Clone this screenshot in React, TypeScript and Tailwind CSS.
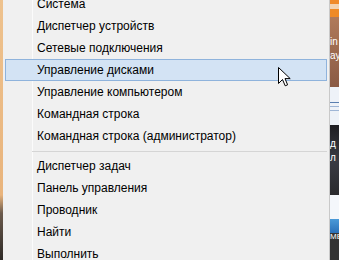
import React from "react";

const top = [
  "Система",
  "Диспетчер устройств",
  "Сетевые подключения",
  "Управление дисками",
  "Управление компьютером",
  "Командная строка",
  "Командная строка (администратор)",
];
const bottom = ["Диспетчер задач", "Панель управления", "Проводник", "Найти", "Выполнить"];

function Row({ label, active }: { label: string; active?: boolean }) {
  return (
    <div
      className={
        active
          ? "h-[22px] flex items-center pl-[31px] border border-[#8fb3dc] bg-[#d3e3f4]"
          : "h-[22px] flex items-center pl-[32px]"
      }
    >
      <span className="text-[12px] text-[#000] leading-none whitespace-nowrap">{label}</span>
    </div>
  );
}

export default function App() {
  return (
    <div
      className="w-[339px] h-[260px] overflow-hidden flex"
      style={{ fontFamily: '"Liberation Sans", Arial, sans-serif' }}
    >
      <div className="w-[3px] h-full bg-[linear-gradient(to_bottom,#eec28e_0%,#e9b47c_75%,#6b5a4c_82%,#2e2a27_100%)]" />
      <div className="w-[327px] h-full bg-[#f0f0f0] border-r border-[#c9c9c9] bg-[linear-gradient(to_right,#f0f0f0_29px,#fbfbfb_29px,#fbfbfb_30px,#f0f0f0_30px)]">
        <div className="mt-[-7px] px-[2px] flex flex-col">
          {top.map((t, i) => (
            <Row key={t} label={t} active={i === 3} />
          ))}
          <div className="h-[8px] flex items-center">
            <div className="ml-[27px] flex-1 h-[1px] bg-[#d5d5d5]" />
          </div>
          {bottom.map((t) => (
            <Row key={t} label={t} />
          ))}
        </div>
      </div>
      <div className="w-[9px] h-full flex flex-col overflow-hidden text-[10px] leading-none">
        <div className="h-[4px] bg-[#f08a2a]" />
        <div className="h-[5px] bg-[#f3d2b0]" />
        <div className="h-[8px] bg-[#ef8a26]" />
        <div className="h-[70px] bg-[linear-gradient(to_bottom,#b07a5a,#8a5a44)] text-white pt-[20px]">
          <div>in</div>
          <div className="mt-[4px]">ау</div>
        </div>
        <div className="h-[38px] bg-[#eef2f8] flex flex-col justify-center gap-[3px]">
          <div className="h-[1px] bg-[#5a7fb0]" />
          <div className="h-[1px] bg-[#9fb6d6]" />
          <div className="h-[1px] bg-[#9fb6d6]" />
        </div>
        <div className="h-[70px] bg-[linear-gradient(to_bottom,#1e1e22,#3a3c44,#2a2a2e)] text-white pt-[14px]">
          <div>д</div>
          <div className="mt-[4px]">л</div>
        </div>
        <div className="h-[38px] bg-[#f4f7fb] flex items-end">
          <div className="w-full h-[14px] bg-[linear-gradient(to_bottom,#4a9ad8,#2a70b8)]" />
        </div>
        <div className="h-[27px] bg-[#333] text-white text-[8px]">МЕ</div>
      </div>
      <svg className="absolute left-[278px] top-[67px]" width="13" height="20" viewBox="0 0 13 20">
        <path d="M0.5 0.5 L0.5 16.5 L4.5 12.5 L7.2 18.8 L9.6 17.8 L7 11.6 L12.2 11.6 Z" fill="#fff" stroke="#000" strokeWidth="1" strokeLinejoin="miter" />
      </svg>
    </div>
  );
}
